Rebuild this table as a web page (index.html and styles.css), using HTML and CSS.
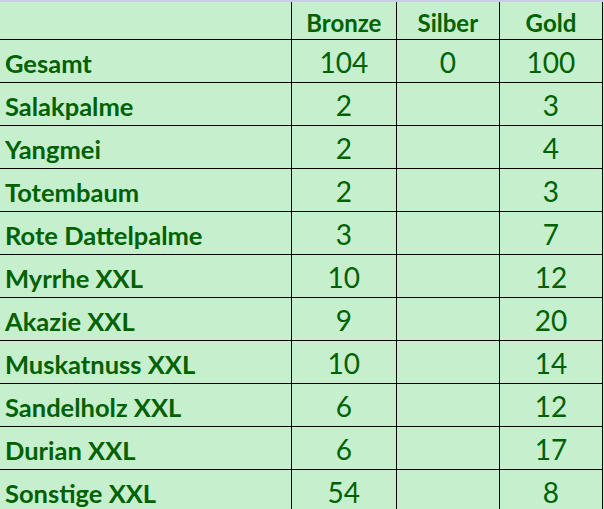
FILE: index.html
```html
<!DOCTYPE html>
<html lang="de">
<head>
<meta charset="utf-8">
<title>Medaillen</title>
<link rel="stylesheet" href="styles.css">
</head>
<body>
<div class="topline"></div>
<table class="sheet">
  <colgroup>
    <col class="c-name">
    <col class="c-num">
    <col class="c-num2">
    <col class="c-num3">
  </colgroup>
  <thead>
    <tr class="head">
      <th class="name"></th>
      <th>Bronze</th>
      <th>Silber</th>
      <th>Gold</th>
    </tr>
  </thead>
  <tbody>
    <tr><th class="name">Gesamt</th><td>104</td><td>0</td><td>100</td></tr>
    <tr><th class="name">Salakpalme</th><td>2</td><td></td><td>3</td></tr>
    <tr><th class="name">Yangmei</th><td>2</td><td></td><td>4</td></tr>
    <tr><th class="name">Totembaum</th><td>2</td><td></td><td>3</td></tr>
    <tr><th class="name">Rote Dattelpalme</th><td>3</td><td></td><td>7</td></tr>
    <tr><th class="name">Myrrhe XXL</th><td>10</td><td></td><td>12</td></tr>
    <tr><th class="name">Akazie XXL</th><td>9</td><td></td><td>20</td></tr>
    <tr><th class="name">Muskatnuss XXL</th><td>10</td><td></td><td>14</td></tr>
    <tr><th class="name">Sandelholz XXL</th><td>6</td><td></td><td>12</td></tr>
    <tr><th class="name">Durian XXL</th><td>6</td><td></td><td>17</td></tr>
    <tr><th class="name">Sonstige XXL</th><td>54</td><td></td><td>8</td></tr>
  </tbody>
</table>
</body>
</html>
```

FILE: styles.css
```css
html, body {
  margin: 0;
  padding: 0;
  background: #c6efce;
  overflow: hidden;
}

.topline {
  height: 2px;
  background: #c9cde3;
}

.sheet {
  border-collapse: collapse;
  table-layout: fixed;
  width: 603px;
  font-family: Lato, "Liberation Sans", sans-serif;
  color: #006100;
}

.c-name { width: 291px; }
.c-num { width: 105px; }
.c-num2 { width: 103px; }
.c-num3 { width: 103px; }

.sheet th,
.sheet td {
  padding: 0;
  border: 1px solid #000;
  vertical-align: bottom;
  text-align: center;
  white-space: nowrap;
  overflow: hidden;
}

.sheet tr { height: 43px; }

.sheet tr.head { height: 37px; }

.sheet tr.head th {
  border-top: none;
  font-size: 24px;
  font-weight: 700;
  line-height: 28px;
  padding-bottom: 2px;
}

.sheet .name {
  border-left: none;
  text-align: left;
  padding-left: 5px;
  font-size: 25.5px;
  font-weight: 700;
  line-height: 28px;
  padding-bottom: 5px;
}

.sheet td {
  font-size: 28px;
  font-weight: 400;
  line-height: 32px;
  padding-bottom: 4px;
}
```
